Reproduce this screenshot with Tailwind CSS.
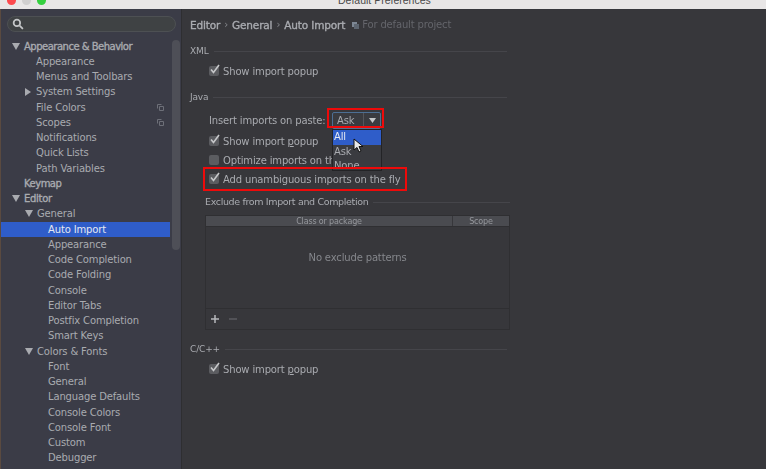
<!DOCTYPE html>
<html lang="en">
<head>
    <meta charset="UTF-8">
    <title>Default Preferences</title>
    <script src="https://cdn.jsdelivr.net/npm/@tailwindcss/browser@4"></script>
</head>
<body class="w-[766px] h-[469px] overflow-hidden bg-[#37373b] font-['DejaVu_Sans',sans-serif] text-[10px] tracking-[-0.15px] text-[#a9abb0] blur-[0.35px]">
    <!-- title bar -->
    <div class="relative h-[9px] bg-[#e8e6e6] overflow-hidden">
        <div class="absolute left-[7px] top-[-4px] flex gap-[6px]">
            <span class="w-[9px] h-[9px] rounded-full bg-[#fc4a4e]"></span>
            <span class="w-[9px] h-[9px] rounded-full bg-[#d0cfcf]"></span>
            <span class="w-[9px] h-[9px] rounded-full bg-[#35d03f]"></span>
        </div>
        <div class="absolute left-[338px] top-[-7px] text-[10.5px] tracking-normal leading-[14px] font-['Liberation_Sans',sans-serif] text-[#4a4a4a] whitespace-nowrap">Default Preferences</div>
    </div>

    <div class="flex h-[460px]">
        <!-- sidebar -->
        <div class="relative w-[181px] h-full bg-[#3b3c47] border-l border-[#5a4a40] flex-none overflow-hidden">
            <div class="mx-[6px] mt-[7px] h-[16px] w-[169px] rounded-full bg-[#3f4244] border border-[#4d5053] flex items-center pl-[4px]">
                <svg width="12" height="12" viewBox="0 0 11 11" fill="none" stroke="#c4c6c8" stroke-width="1.6"><circle cx="4.5" cy="4.5" r="3"/><path d="M7 7l3 3"/></svg>
            </div>
            <div class="absolute left-[171px] top-[31px] w-[8px] h-[210px] rounded-full bg-[#4e4f57]"></div>
            <div class="mt-[6.5px] leading-[15.26px]">
                <div class="flex items-center h-[15.26px] pl-[11px] [-webkit-text-stroke:0.35px] tracking-[-0.5px]"><svg class="mr-[4px]" width="8" height="7" viewBox="0 0 8 7" fill="#a9abb0"><path d="M0 0h8L4 7z"/></svg>Appearance &amp; Behavior</div>
                <div class="h-[15.26px] pl-[35px]">Appearance</div>
                <div class="h-[15.26px] pl-[35px]">Menus and Toolbars</div>
                <div class="flex items-center h-[15.26px] pl-[24px]"><svg class="mr-[5px]" width="6" height="8" viewBox="0 0 6 8" fill="#a9abb0"><path d="M0 0l6 4-6 4z"/></svg>System Settings</div>
                <div class="flex items-center justify-between h-[15.26px] pl-[35px] pr-[17px]">File Colors<svg width="7" height="7" viewBox="0 0 7 7" fill="none" stroke="#6d6f78"><path d="M.5 4.5v-4h4M2.5 2.5h4v4h-4z"/></svg></div>
                <div class="flex items-center justify-between h-[15.26px] pl-[35px] pr-[17px]">Scopes<svg width="7" height="7" viewBox="0 0 7 7" fill="none" stroke="#6d6f78"><path d="M.5 4.5v-4h4M2.5 2.5h4v4h-4z"/></svg></div>
                <div class="h-[15.26px] pl-[35px]">Notifications</div>
                <div class="h-[15.26px] pl-[35px]">Quick Lists</div>
                <div class="h-[15.26px] pl-[35px]">Path Variables</div>
                <div class="h-[15.26px] pl-[23px] [-webkit-text-stroke:0.35px] tracking-[-0.5px]">Keymap</div>
                <div class="flex items-center h-[15.26px] pl-[11px] [-webkit-text-stroke:0.35px] tracking-[-0.3px]"><svg class="mr-[4px]" width="8" height="7" viewBox="0 0 8 7" fill="#a9abb0"><path d="M0 0h8L4 7z"/></svg>Editor</div>
                <div class="flex items-center h-[15.26px] pl-[24px]"><svg class="mr-[4px]" width="8" height="7" viewBox="0 0 8 7" fill="#a9abb0"><path d="M0 0h8L4 7z"/></svg>General</div>
                <div class="h-[15.26px] w-[169px] pl-[47px] bg-[#2f5dc9] text-[#e4e8f2]">Auto Import</div>
                <div class="h-[15.26px] pl-[47px]">Appearance</div>
                <div class="h-[15.26px] pl-[47px]">Code Completion</div>
                <div class="h-[15.26px] pl-[47px]">Code Folding</div>
                <div class="h-[15.26px] pl-[47px]">Console</div>
                <div class="h-[15.26px] pl-[47px]">Editor Tabs</div>
                <div class="h-[15.26px] pl-[47px]">Postfix Completion</div>
                <div class="h-[15.26px] pl-[47px]">Smart Keys</div>
                <div class="flex items-center h-[15.26px] pl-[24px]"><svg class="mr-[4px]" width="8" height="7" viewBox="0 0 8 7" fill="#a9abb0"><path d="M0 0h8L4 7z"/></svg>Colors &amp; Fonts</div>
                <div class="h-[15.26px] pl-[47px]">Font</div>
                <div class="h-[15.26px] pl-[47px]">General</div>
                <div class="h-[15.26px] pl-[47px]">Language Defaults</div>
                <div class="h-[15.26px] pl-[47px]">Console Colors</div>
                <div class="h-[15.26px] pl-[47px]">Console Font</div>
                <div class="h-[15.26px] pl-[47px]">Custom</div>
                <div class="h-[15.26px] pl-[47px]">Debugger</div>
            </div>
        </div>

        <!-- settings pane -->
        <div class="relative flex-1 border-l border-[#2e2e31] pl-[8px]">
            <div class="mt-[9px] h-[14px] leading-[14px] flex items-center whitespace-nowrap">
                <span class="text-[10.5px] [-webkit-text-stroke:0.35px]">Editor</span><span class="mx-[4px] text-[#85878c]">›</span><span class="text-[10.5px] [-webkit-text-stroke:0.35px]">General</span><span class="mx-[4px] text-[#85878c]">›</span><span class="text-[10.5px] [-webkit-text-stroke:0.35px]">Auto Import</span>
                <svg class="ml-[7px] mr-[3px]" width="7" height="7" viewBox="0 0 7 7" fill="#7d8794"><path d="M0 0h5v5H0z"/><path d="M2 2h5v5H2z" fill="#5d6570"/></svg>
                <span class="text-[#64656b]">For default project</span>
            </div>

            <div class="mt-[13px] flex items-center gap-[5px] h-[13px] w-[317px] text-[9px]">XML<div class="flex-1 h-px bg-[#45454a]"></div></div>
            <div class="mt-[6px] ml-[19px] flex items-center gap-[4px] h-[14px]">
                <span class="relative w-[10px] h-[10px] rounded-[2px] bg-[#5b5c60]"><svg class="absolute left-0 top-[-3px]" width="12" height="12" viewBox="0 0 12 12" fill="none" stroke="#c7c8ca" stroke-width="1.6"><path d="M2 6.5l2.5 3L10 2"/></svg></span>
                <span>Show import popup</span>
            </div>

            <div class="mt-[13px] flex items-center gap-[5px] h-[13px] w-[317px] text-[9px]">Java<div class="flex-1 h-px bg-[#45454a]"></div></div>
            <div class="mt-[8px] ml-[19px] flex items-center h-[16px]">
                <span class="w-[115px] flex-none whitespace-nowrap">Insert imports on paste:</span>
                <div class="ml-[8px] w-[49px] h-[17px] rounded-[2px] border border-[#4d6f94] bg-[#3a3b40] flex items-center">
                    <span class="flex-1 pl-[4px]">Ask</span>
                    <span class="w-[17px] h-full border-l border-[#55565b] flex items-center justify-center"><svg width="7" height="5" viewBox="0 0 7 5" fill="#c4c6c8"><path d="M0 0h7L3.5 5z"/></svg></span>
                </div>
            </div>
            <div class="mt-[6px] ml-[19px] flex items-center gap-[4px] h-[14px]">
                <span class="relative w-[10px] h-[10px] rounded-[2px] bg-[#5b5c60]"><svg class="absolute left-0 top-[-3px]" width="12" height="12" viewBox="0 0 12 12" fill="none" stroke="#c7c8ca" stroke-width="1.6"><path d="M2 6.5l2.5 3L10 2"/></svg></span>
                <span>Show import <u>p</u>opup</span>
            </div>
            <div class="mt-[5px] ml-[19px] flex items-center gap-[4px] h-[14px]">
                <span class="w-[10px] h-[10px] rounded-[2px] bg-[#5b5c60]"></span>
                <span>Optimize imports on the fly</span>
            </div>
            <div class="mt-[5px] ml-[19px] flex items-center gap-[4px] h-[14px]">
                <span class="relative w-[10px] h-[10px] rounded-[2px] bg-[#5b5c60]"><svg class="absolute left-0 top-[-3px]" width="12" height="12" viewBox="0 0 12 12" fill="none" stroke="#c7c8ca" stroke-width="1.6"><path d="M2 6.5l2.5 3L10 2"/></svg></span>
                <span>Add unambiguous imports on the fly</span>
            </div>

            <div class="mt-[10px] ml-[15px] flex items-center gap-[5px] h-[13px] w-[305px] text-[9.5px] tracking-[-0.35px]">Exclude from Import and Completion<div class="flex-1 h-px bg-[#45454a]"></div></div>

            <!-- exclude table -->
            <div class="mt-[6px] ml-[15px] w-[305px] h-[115px] border border-[#2f2f32] flex flex-col">
                <div class="flex h-[11px] bg-[#4a4b50] text-[8px] leading-[11px] text-[#96989d] border-b border-[#2f2f32] flex-none">
                    <div class="w-[246px] text-center">Class or package</div>
                    <div class="flex-1 text-center border-l border-[#37373b]">Scope</div>
                </div>
                <div class="h-[61px] flex items-center justify-center text-[#85878c]">No exclude patterns</div>
                <div class="mt-auto h-[21px] border-t border-[#2f2f32] flex items-center gap-[8px] pl-[4px] flex-none">
                    <svg width="10" height="10" viewBox="0 0 10 10" stroke="#b6b8bc" stroke-width="1.5"><path d="M5 1v8M1 5h8"/></svg>
                    <svg width="10" height="10" viewBox="0 0 10 10" stroke="#5c5d62" stroke-width="1.5"><path d="M1 5h8"/></svg>
                </div>
            </div>

            <div class="mt-[13px] flex items-center gap-[5px] h-[13px] w-[317px] text-[9px]">C/C++<div class="flex-1 h-px bg-[#45454a]"></div></div>
            <div class="mt-[6px] ml-[19px] flex items-center gap-[4px] h-[14px]">
                <span class="relative w-[10px] h-[10px] rounded-[2px] bg-[#5b5c60]"><svg class="absolute left-0 top-[-3px]" width="12" height="12" viewBox="0 0 12 12" fill="none" stroke="#c7c8ca" stroke-width="1.6"><path d="M2 6.5l2.5 3L10 2"/></svg></span>
                <span>Show import <u>p</u>opup</span>
            </div>

            <!-- open combo list -->
            <div class="absolute left-[150px] top-[120px] w-[50px] h-[42px] bg-[#3a3b40] border border-[#232326] overflow-hidden leading-[14px]">
                <div class="h-[15px] bg-[#2f5dc9] text-[#e4e8f2] pl-[1px]">All</div>
                <div class="h-[14px] pl-[1px]">Ask</div>
                <div class="h-[14px] pl-[1px]">None</div>
            </div>
            <!-- cursor -->
            <svg class="absolute left-[171px] top-[129px]" width="11" height="16" viewBox="0 0 11 16" fill="#e8e8e8" stroke="#111" stroke-width="1"><path d="M1 1v11l3-2.5 2 4.5 2-1-2-4.5h4z"/></svg>
            <!-- red annotation boxes -->
            <div class="absolute left-[145px] top-[99px] w-[57px] h-[20px] border-[2px] border-[#ee0a0a]"></div>
            <div class="absolute left-[21px] top-[158px] w-[204px] h-[24px] border-[2px] border-[#ee0a0a]"></div>
        </div>
    </div>
</body>
</html>
